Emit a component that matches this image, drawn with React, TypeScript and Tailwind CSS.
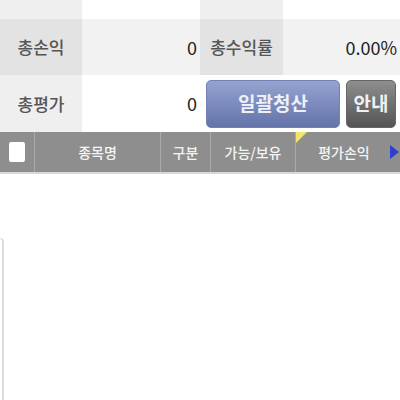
import React from "react";

const font = { fontFamily: '"Noto Sans CJK KR", "Noto Sans", sans-serif' };

export default function App() {
  return (
    <div className="w-[400px] h-[400px] bg-white overflow-hidden" style={font}>
      {/* row 0 (partially visible) */}
      <div className="flex h-[19px]">
        <div className="w-[82px] bg-[#efefef]" />
        <div className="w-[118px] bg-white" />
        <div className="w-[83px] bg-[#efefef]" />
        <div className="flex-1 bg-white" />
      </div>
      {/* row 1 */}
      <div className="flex h-[56px]">
        <div className="w-[82px] bg-[#e3e3e3] flex items-center justify-center text-[17px] font-medium text-[#555]">
          총손익
        </div>
        <div className="w-[118px] bg-[#f2f2f2] flex items-center justify-end pr-[3px] text-[18px] text-[#222]">
          0
        </div>
        <div className="w-[83px] bg-[#e3e3e3] flex items-center justify-center text-[17px] font-medium text-[#555]">
          총수익률
        </div>
        <div className="flex-1 bg-[#f2f2f2] flex items-center justify-end pr-[3px] text-[18px] text-[#222]">
          0.00%
        </div>
      </div>
      {/* row 2 */}
      <div className="flex h-[57px]">
        <div className="w-[82px] bg-[#efefef] flex items-center justify-center text-[17px] font-medium text-[#555]">
          총평가
        </div>
        <div className="w-[118px] bg-white flex items-center justify-end pr-[3px] text-[18px] text-[#222]">
          0
        </div>
        <div className="flex-1 bg-white flex items-center pl-[6px] pr-[4px] gap-[6px]">
          <div className="w-[134px] h-[48px] rounded-[5px] bg-gradient-to-b from-[#95a3d0] to-[#6474aa] border border-[#7282b5] flex items-center justify-center text-[19px] font-bold text-[#eef0f8]">
            일괄청산
          </div>
          <div className="w-[50px] h-[48px] rounded-[5px] bg-gradient-to-b from-[#8e8e8e] to-[#555] border border-[#666] flex items-center justify-center text-[19px] font-bold text-[#f0f0f0]">
            안내
          </div>
        </div>
      </div>
      {/* table header */}
      <div className="flex h-[42px] bg-[#8e8e8e] text-[#f4f4f4] text-[14px] font-medium border-b-[2px] border-[#d8d8d8]">
        <div className="w-[35px] flex items-center justify-center border-r border-[#aaa]">
          <div className="w-[16px] h-[20px] bg-white rounded-[2px]" />
        </div>
        <div className="w-[126px] flex items-center justify-center border-r border-[#aaa]">종목명</div>
        <div className="w-[50px] flex items-center justify-center border-r border-[#aaa]">구분</div>
        <div className="w-[85px] flex items-center justify-center border-r border-[#aaa]">가능/보유</div>
        <div className="flex-1 relative flex items-center">
          <svg className="absolute left-0 top-0" width="12" height="12" viewBox="0 0 12 12">
            <polygon points="0,0 11,0 0,11" fill="#f3e46a" />
          </svg>
          <div className="flex-1 flex items-center justify-center pl-[2px]">평가손익</div>
          <svg className="mr-[1px]" width="9" height="14" viewBox="0 0 9 14">
            <polygon points="0,0 9,7 0,14" fill="#2d3fd0" />
          </svg>
        </div>
      </div>
      {/* partial panel edge */}
      <div className="mt-[64px] w-[4px] h-[170px] border-t border-r-[2px] border-[#dcdcdc] rounded-tr-[6px]" />
    </div>
  );
}
